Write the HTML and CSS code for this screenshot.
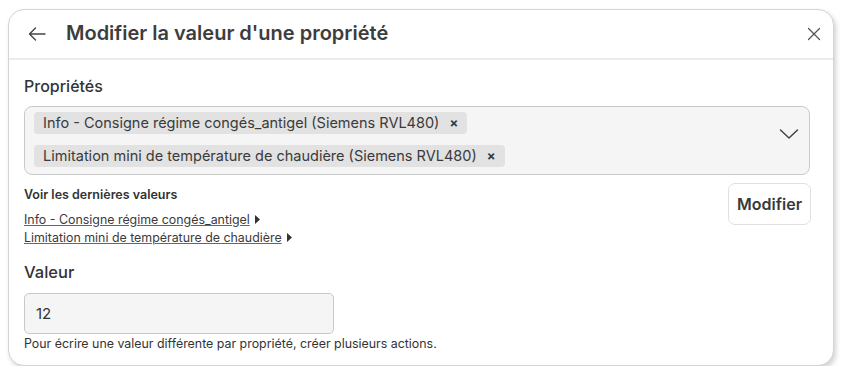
FILE: index.html
```html
<!DOCTYPE html>
<html lang="fr">
<head>
<meta charset="utf-8">
<link rel="stylesheet" href="styles.css">
</head>
<body>
<div class="card">
  <div class="header">
    <svg class="back" width="18" height="14" viewBox="0 0 18 14"><path d="M17 7H1.5M7.5 1L1.5 7l6 6" fill="none" stroke="#444" stroke-width="1.4" stroke-linecap="round" stroke-linejoin="round"/></svg>
    <h1 class="title">Modifier la valeur d'une propriété</h1>
    <svg class="close" width="14" height="14" viewBox="0 0 14 14"><path d="M1.5 1.5l11 11M12.5 1.5l-11 11" stroke="#555" stroke-width="1.3" stroke-linecap="round"/></svg>
  </div>
  <div class="body">
    <div class="label">Propriétés</div>
    <div class="select">
      <div class="chips">
        <span class="chip">Info - Consigne régime congés_antigel (Siemens RVL480) <span class="x">×</span></span>
        <span class="chip">Limitation mini de température de chaudière (Siemens RVL480) <span class="x">×</span></span>
      </div>
      <svg class="chev" width="20" height="12" viewBox="0 0 20 12"><path d="M1.5 2l8.5 8 8.5-8" fill="none" stroke="#444" stroke-width="1.5" stroke-linecap="round" stroke-linejoin="round"/></svg>
    </div>
    <div class="row">
      <div class="last">
        <div class="last-title">Voir les dernières valeurs</div>
        <div class="link"><a>Info - Consigne régime congés_antigel</a><svg class="tri" width="5" height="9" viewBox="0 0 5 9"><path d="M0 0L5 4.5 0 9z" fill="#333"/></svg></div>
        <div class="link"><a>Limitation mini de température de chaudière</a><svg class="tri" width="5" height="9" viewBox="0 0 5 9"><path d="M0 0L5 4.5 0 9z" fill="#333"/></svg></div>
      </div>
      <button class="btn">Modifier</button>
    </div>
    <div class="label label2">Valeur</div>
    <div class="input">12</div>
    <div class="help">Pour écrire une valeur différente par propriété, créer plusieurs actions.</div>
  </div>
</div>
</body>
</html>
```
FILE: styles.css
```css
* { box-sizing: border-box; }
body {
  margin: 0;
  background: #fff;
  font-family: Inter, "Noto Sans", sans-serif;
  color: #333;
}
.card {
  margin: 9px 0 0 8px;
  width: 826px;
  height: 357px;
  border: 1px solid #d4d4d4;
  border-radius: 16px;
  background: #fff;
  box-shadow: 2px 3px 5px rgba(0,0,0,0.18);
  overflow: hidden;
}
.header {
  height: 50px;
  display: flex;
  align-items: center;
  padding: 0 12px 0 19px;
  border-bottom: 2px solid #ececec;
}
.back { margin-right: 20px; }
.title {
  flex: 1;
  margin: 0;
  font-size: 20px;
  font-weight: 600;
  color: #3d3d3d;
  letter-spacing: 0px;
  margin-top: -2px;
}
.body { padding: 16px 23px 0 15px; }
.label {
  font-size: 16px;
  font-weight: 500;
  color: #333;
  line-height: 20px;
}
.select {
  margin-top: 10px;
  height: 69px;
  border: 1px solid #c9c9c9;
  border-radius: 8px;
  background: #f5f5f5;
  display: flex;
  align-items: flex-start;
  padding: 5px 10px 0 9px;
}
.chips {
  flex: 1;
  display: flex;
  flex-direction: column;
  align-items: flex-start;
  gap: 11px;
}
.chip {
  height: 22px;
  line-height: 22px;
  background: #e2e2e2;
  border-radius: 4px;
  padding: 0 9px;
  font-size: 14.5px;
  color: #3a3a3a;
}
.chip .x { font-size: 13px; font-weight: 700; margin-left: 6px; }
.chev { margin-top: 16px; }
.row {
  display: flex;
  justify-content: space-between;
  align-items: flex-start;
  margin-top: 8px;
}
.last { padding-top: 4px; }
.last-title { font-size: 12.5px; font-weight: 600; color: #333; line-height: 16px; margin-bottom: 8px; }
.link { font-size: 12.4px; height: 18px; line-height: 18px; color: #3a3a3a; display: flex; align-items: center; }
.link a { text-decoration: underline; text-decoration-color: #666; }
.tri { margin-left: 5px; margin-top: -2px; }
.btn {
  width: 83px;
  height: 42px;
  border: 1px solid #e0e0e0;
  border-radius: 7px;
  background: #fff;
  font-family: inherit;
  font-size: 16px;
  font-weight: 600;
  color: #3a3a3a;
  margin-right: -1px;
}
.label2 { margin-top: 15px; font-size: 16.5px; }
.input {
  margin-top: 11px;
  width: 310px;
  height: 41px;
  border: 1px solid #c9c9c9;
  border-radius: 5px;
  background: #f5f5f5;
  padding: 0 11px;
  line-height: 39px;
  font-size: 15px;
  color: #333;
}
.help { font-size: 12.4px; color: #333; margin-top: 2px; }
```
